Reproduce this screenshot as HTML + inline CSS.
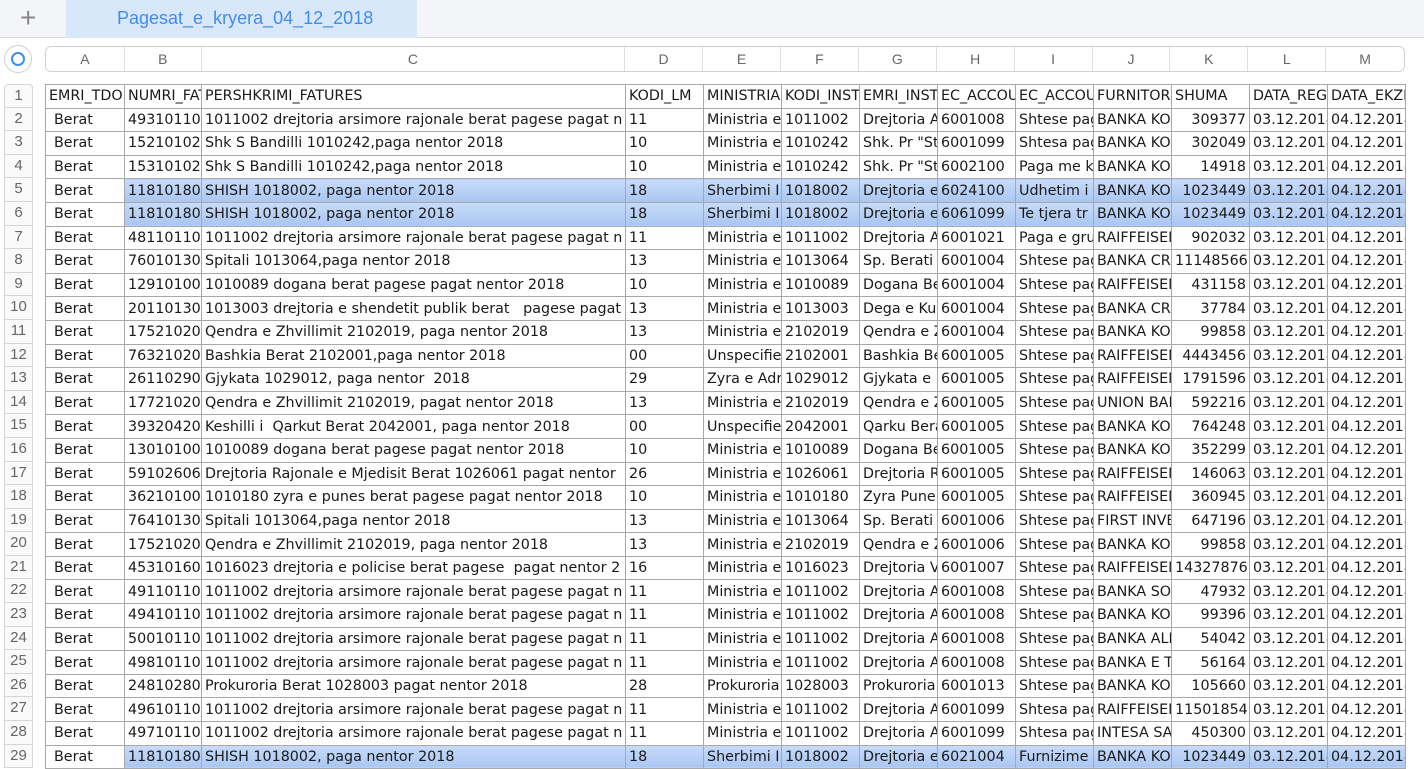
<!DOCTYPE html>
<html><head><meta charset="utf-8"><style>
*{box-sizing:border-box;margin:0;padding:0}
body{width:1424px;height:768px;overflow:hidden;background:#fff;font-family:"DejaVu Sans",Verdana,sans-serif;position:relative}
.top{position:absolute;left:0;top:0;width:1424px;height:38px;background:#f4f5f8;border-bottom:1px solid #d8d9dd}
.tab{position:absolute;left:66px;top:0;width:351px;height:38px;background:#d9e7fb;color:#3f8df0;font-family:"Liberation Sans",sans-serif;font-size:18px;line-height:37px;padding-left:51px}
.plus{position:absolute;left:20px;top:2px;font-family:"Liberation Sans",sans-serif;font-size:28px;color:#888;font-weight:300}
.circ{position:absolute;left:4px;top:45px;width:28px;height:28px;border:1px solid #cfd0d4;border-radius:50%;background:#fff}
.circ:after{content:"";position:absolute;left:6px;top:6px;width:14px;height:14px;border:2px solid #3b8ff0;border-radius:50%;box-sizing:border-box}
.colh{position:absolute;left:45px;top:46px;width:1360px;height:26px;border:1px solid #d0d1d5;border-radius:6px;background:#fff;display:flex;font-family:"Liberation Sans",sans-serif;font-size:14px;color:#666}
.colh div{border-right:1px solid #e0e0e3;text-align:center;line-height:24px}
.colh div:last-child{border-right:none}
.rows{position:absolute;left:4px;top:84px;width:29px}
.rows div{height:23.6px;border:1px solid #d4d5d9;border-top:none;font-family:"Liberation Sans",sans-serif;font-size:15px;color:#666;text-align:center;line-height:22px;background:#fafafa}
.rows div:first-child{border-top:1px solid #d4d5d9;border-radius:4px 4px 0 0}
table{position:absolute;left:45px;top:84px;border-collapse:collapse;table-layout:fixed;width:1360px;font-size:14.3px;color:#1a1a1a}
td{height:23.6px;border:1px solid #a8a8a8;white-space:nowrap;overflow:hidden;padding:0 0 0 3px;line-height:22px;text-overflow:clip}
td:first-child{padding-left:8px}
tr:first-child td:first-child{padding-left:3px}
td.r{text-align:right;padding-right:3px}
tr.h td:not(:first-child){background:linear-gradient(#c8dbf8,#a9c6f2)}
</style></head><body>
<div class="top"><div class="plus">+</div><div class="tab">Pagesat_e_kryera_04_12_2018</div></div>
<div class="circ"></div>
<div class="colh">
<div style="width:79px">A</div><div style="width:77px">B</div><div style="width:424px">C</div><div style="width:78px">D</div><div style="width:78px">E</div><div style="width:78px">F</div><div style="width:78px">G</div><div style="width:78px">H</div><div style="width:78px">I</div><div style="width:78px">J</div><div style="width:78px">K</div><div style="width:78px">L</div><div style="width:78px">M</div>
</div>
<div class="rows"><div>1</div><div>2</div><div>3</div><div>4</div><div>5</div><div>6</div><div>7</div><div>8</div><div>9</div><div>10</div><div>11</div><div>12</div><div>13</div><div>14</div><div>15</div><div>16</div><div>17</div><div>18</div><div>19</div><div>20</div><div>21</div><div>22</div><div>23</div><div>24</div><div>25</div><div>26</div><div>27</div><div>28</div><div>29</div></div>
<table>
<colgroup><col style="width:79px"><col style="width:77px"><col style="width:424px"><col style="width:78px"><col style="width:78px"><col style="width:78px"><col style="width:78px"><col style="width:78px"><col style="width:78px"><col style="width:78px"><col style="width:78px"><col style="width:78px"><col style="width:78px"></colgroup>
<tr><td>EMRI_TDO</td><td>NUMRI_FAT</td><td>PERSHKRIMI_FATURES</td><td>KODI_LM</td><td>MINISTRIA</td><td>KODI_INST</td><td>EMRI_INST</td><td>EC_ACCOU</td><td>EC_ACCOU</td><td>FURNITORI</td><td>SHUMA</td><td>DATA_REG</td><td>DATA_EKZE</td></tr>
<tr><td>Berat</td><td>493101100</td><td>1011002 drejtoria arsimore rajonale berat pagese pagat n</td><td>11</td><td>Ministria e</td><td>1011002</td><td>Drejtoria A</td><td>6001008</td><td>Shtese pag</td><td>BANKA KO.</td><td class="r">309377</td><td>03.12.2018</td><td>04.12.2018</td></tr>
<tr><td>Berat</td><td>152101024</td><td>Shk S Bandilli 1010242,paga nentor 2018</td><td>10</td><td>Ministria e</td><td>1010242</td><td>Shk. Pr "St</td><td>6001099</td><td>Shtesa pag</td><td>BANKA KO.</td><td class="r">302049</td><td>03.12.2018</td><td>04.12.2018</td></tr>
<tr><td>Berat</td><td>153101024</td><td>Shk S Bandilli 1010242,paga nentor 2018</td><td>10</td><td>Ministria e</td><td>1010242</td><td>Shk. Pr "St</td><td>6002100</td><td>Paga me k</td><td>BANKA KO.</td><td class="r">14918</td><td>03.12.2018</td><td>04.12.2018</td></tr>
<tr class="h"><td>Berat</td><td>118101800</td><td>SHISH 1018002, paga nentor 2018</td><td>18</td><td>Sherbimi I</td><td>1018002</td><td>Drejtoria e</td><td>6024100</td><td>Udhetim i</td><td>BANKA KO.</td><td class="r">1023449</td><td>03.12.2018</td><td>04.12.2018</td></tr>
<tr class="h"><td>Berat</td><td>118101800</td><td>SHISH 1018002, paga nentor 2018</td><td>18</td><td>Sherbimi I</td><td>1018002</td><td>Drejtoria e</td><td>6061099</td><td>Te tjera tr</td><td>BANKA KO.</td><td class="r">1023449</td><td>03.12.2018</td><td>04.12.2018</td></tr>
<tr><td>Berat</td><td>481101100</td><td>1011002 drejtoria arsimore rajonale berat pagese pagat n</td><td>11</td><td>Ministria e</td><td>1011002</td><td>Drejtoria A</td><td>6001021</td><td>Paga e gru</td><td>RAIFFEISEN</td><td class="r">902032</td><td>03.12.2018</td><td>04.12.2018</td></tr>
<tr><td>Berat</td><td>760101306</td><td>Spitali 1013064,paga nentor 2018</td><td>13</td><td>Ministria e</td><td>1013064</td><td>Sp. Berati</td><td>6001004</td><td>Shtese pag</td><td>BANKA CRE</td><td class="r">11148566</td><td>03.12.2018</td><td>04.12.2018</td></tr>
<tr><td>Berat</td><td>129101008</td><td>1010089 dogana berat pagese pagat nentor 2018</td><td>10</td><td>Ministria e</td><td>1010089</td><td>Dogana Be</td><td>6001004</td><td>Shtese pag</td><td>RAIFFEISEN</td><td class="r">431158</td><td>03.12.2018</td><td>04.12.2018</td></tr>
<tr><td>Berat</td><td>201101300</td><td>1013003 drejtoria e shendetit publik berat &nbsp; pagese pagat</td><td>13</td><td>Ministria e</td><td>1013003</td><td>Dega e Ku</td><td>6001004</td><td>Shtese pag</td><td>BANKA CRE</td><td class="r">37784</td><td>03.12.2018</td><td>04.12.2018</td></tr>
<tr><td>Berat</td><td>175210201</td><td>Qendra e Zhvillimit 2102019, paga nentor 2018</td><td>13</td><td>Ministria e</td><td>2102019</td><td>Qendra e Z</td><td>6001004</td><td>Shtese pag</td><td>BANKA KO.</td><td class="r">99858</td><td>03.12.2018</td><td>04.12.2018</td></tr>
<tr><td>Berat</td><td>763210200</td><td>Bashkia Berat 2102001,paga nentor 2018</td><td>00</td><td>Unspecifie</td><td>2102001</td><td>Bashkia Be</td><td>6001005</td><td>Shtese pag</td><td>RAIFFEISEN</td><td class="r">4443456</td><td>03.12.2018</td><td>04.12.2018</td></tr>
<tr><td>Berat</td><td>261102901</td><td>Gjykata 1029012, paga nentor &nbsp;2018</td><td>29</td><td>Zyra e Adr</td><td>1029012</td><td>Gjykata e</td><td>6001005</td><td>Shtese pag</td><td>RAIFFEISEN</td><td class="r">1791596</td><td>03.12.2018</td><td>04.12.2018</td></tr>
<tr><td>Berat</td><td>177210201</td><td>Qendra e Zhvillimit 2102019, pagat nentor 2018</td><td>13</td><td>Ministria e</td><td>2102019</td><td>Qendra e Z</td><td>6001005</td><td>Shtese pag</td><td>UNION BAN</td><td class="r">592216</td><td>03.12.2018</td><td>04.12.2018</td></tr>
<tr><td>Berat</td><td>393204200</td><td>Keshilli i &nbsp;Qarkut Berat 2042001, paga nentor 2018</td><td>00</td><td>Unspecifie</td><td>2042001</td><td>Qarku Bera</td><td>6001005</td><td>Shtese pag</td><td>BANKA KO.</td><td class="r">764248</td><td>03.12.2018</td><td>04.12.2018</td></tr>
<tr><td>Berat</td><td>130101008</td><td>1010089 dogana berat pagese pagat nentor 2018</td><td>10</td><td>Ministria e</td><td>1010089</td><td>Dogana Be</td><td>6001005</td><td>Shtese pag</td><td>BANKA KO.</td><td class="r">352299</td><td>03.12.2018</td><td>04.12.2018</td></tr>
<tr><td>Berat</td><td>591026061</td><td>Drejtoria Rajonale e Mjedisit Berat 1026061 pagat nentor</td><td>26</td><td>Ministria e</td><td>1026061</td><td>Drejtoria R</td><td>6001005</td><td>Shtese pag</td><td>RAIFFEISEN</td><td class="r">146063</td><td>03.12.2018</td><td>04.12.2018</td></tr>
<tr><td>Berat</td><td>362101008</td><td>1010180 zyra e punes berat pagese pagat nentor 2018</td><td>10</td><td>Ministria e</td><td>1010180</td><td>Zyra Pune</td><td>6001005</td><td>Shtese pag</td><td>RAIFFEISEN</td><td class="r">360945</td><td>03.12.2018</td><td>04.12.2018</td></tr>
<tr><td>Berat</td><td>764101306</td><td>Spitali 1013064,paga nentor 2018</td><td>13</td><td>Ministria e</td><td>1013064</td><td>Sp. Berati</td><td>6001006</td><td>Shtese pag</td><td>FIRST INVE</td><td class="r">647196</td><td>03.12.2018</td><td>04.12.2018</td></tr>
<tr><td>Berat</td><td>175210201</td><td>Qendra e Zhvillimit 2102019, paga nentor 2018</td><td>13</td><td>Ministria e</td><td>2102019</td><td>Qendra e Z</td><td>6001006</td><td>Shtese pag</td><td>BANKA KO.</td><td class="r">99858</td><td>03.12.2018</td><td>04.12.2018</td></tr>
<tr><td>Berat</td><td>453101602</td><td>1016023 drejtoria e policise berat pagese &nbsp;pagat nentor 2</td><td>16</td><td>Ministria e</td><td>1016023</td><td>Drejtoria V</td><td>6001007</td><td>Shtese pag</td><td>RAIFFEISEN</td><td class="r">14327876</td><td>03.12.2018</td><td>04.12.2018</td></tr>
<tr><td>Berat</td><td>491101100</td><td>1011002 drejtoria arsimore rajonale berat pagese pagat n</td><td>11</td><td>Ministria e</td><td>1011002</td><td>Drejtoria A</td><td>6001008</td><td>Shtese pag</td><td>BANKA SOC</td><td class="r">47932</td><td>03.12.2018</td><td>04.12.2018</td></tr>
<tr><td>Berat</td><td>494101100</td><td>1011002 drejtoria arsimore rajonale berat pagese pagat n</td><td>11</td><td>Ministria e</td><td>1011002</td><td>Drejtoria A</td><td>6001008</td><td>Shtese pag</td><td>BANKA KO.</td><td class="r">99396</td><td>03.12.2018</td><td>04.12.2018</td></tr>
<tr><td>Berat</td><td>500101100</td><td>1011002 drejtoria arsimore rajonale berat pagese pagat n</td><td>11</td><td>Ministria e</td><td>1011002</td><td>Drejtoria A</td><td>6001008</td><td>Shtese pag</td><td>BANKA ALP</td><td class="r">54042</td><td>03.12.2018</td><td>04.12.2018</td></tr>
<tr><td>Berat</td><td>498101100</td><td>1011002 drejtoria arsimore rajonale berat pagese pagat n</td><td>11</td><td>Ministria e</td><td>1011002</td><td>Drejtoria A</td><td>6001008</td><td>Shtese pag</td><td>BANKA E T</td><td class="r">56164</td><td>03.12.2018</td><td>04.12.2018</td></tr>
<tr><td>Berat</td><td>248102800</td><td>Prokuroria Berat 1028003 pagat nentor 2018</td><td>28</td><td>Prokuroria</td><td>1028003</td><td>Prokuroria</td><td>6001013</td><td>Shtese pag</td><td>BANKA KO.</td><td class="r">105660</td><td>03.12.2018</td><td>04.12.2018</td></tr>
<tr><td>Berat</td><td>496101100</td><td>1011002 drejtoria arsimore rajonale berat pagese pagat n</td><td>11</td><td>Ministria e</td><td>1011002</td><td>Drejtoria A</td><td>6001099</td><td>Shtesa pag</td><td>RAIFFEISEN</td><td class="r">11501854</td><td>03.12.2018</td><td>04.12.2018</td></tr>
<tr><td>Berat</td><td>497101100</td><td>1011002 drejtoria arsimore rajonale berat pagese pagat n</td><td>11</td><td>Ministria e</td><td>1011002</td><td>Drejtoria A</td><td>6001099</td><td>Shtesa pag</td><td>INTESA SAN</td><td class="r">450300</td><td>03.12.2018</td><td>04.12.2018</td></tr>
<tr class="h"><td>Berat</td><td>118101800</td><td>SHISH 1018002, paga nentor 2018</td><td>18</td><td>Sherbimi I</td><td>1018002</td><td>Drejtoria e</td><td>6021004</td><td>Furnizime</td><td>BANKA KO.</td><td class="r">1023449</td><td>03.12.2018</td><td>04.12.2018</td></tr>
</table>
</body></html>
